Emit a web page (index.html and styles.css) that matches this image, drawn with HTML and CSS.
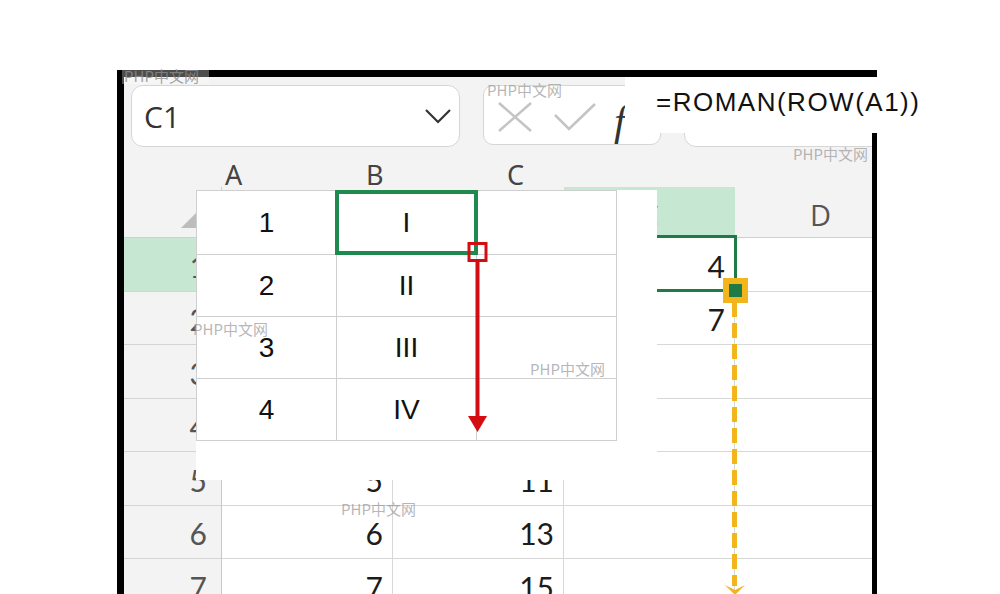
FILE: index.html
```html
<!DOCTYPE html>
<html lang="zh">
<head>
  <meta charset="UTF-8">
  <title>ROMAN(ROW(A1))</title>
  <link rel="stylesheet" href="styles.css">
</head>
<body>
  <div class="sheet">
    <div class="toolbar">
      <div class="namebox">
        <span>C1</span>
        <svg width="28" height="16" viewBox="0 0 28 16"><polyline points="2,2 14,14 26,2" fill="none" stroke="#333" stroke-width="2.2"/></svg>
      </div>
      <div class="fxbox">
        <svg width="36" height="32" viewBox="0 0 36 32"><path d="M2 2 L34 30 M34 2 L2 30" stroke="#c4c4c4" stroke-width="2.6" fill="none"/></svg>
        <svg width="44" height="30" viewBox="0 0 44 30"><polyline points="2,13 16,27 42,2" stroke="#c4c4c4" stroke-width="2.6" fill="none"/></svg>
        <i class="fx">f</i>
      </div>
      <div class="formulabar"></div>
    </div>

    <div class="grid">
      <div class="corner"><span class="tri"></span></div>
      <div class="colhead">A</div>
      <div class="colhead">B</div>
      <div class="colhead on">C</div>
      <div class="colhead">D</div>

      <div class="rowhead on">1</div><div class="cell">1</div><div class="cell">3</div>
      <div class="cell sel">4
        <span class="selbox"></span>
        <span class="dash"></span>
        <svg class="dash-tip" width="24" height="14" viewBox="0 0 24 14"><path d="M2 2 L12 12 L22 2 L12 7 Z" fill="#f2b51b"/></svg>
        <span class="handle"></span>
      </div>
      <div class="cell"></div>

      <div class="rowhead">2</div><div class="cell">2</div><div class="cell">5</div><div class="cell">7</div><div class="cell"></div>
      <div class="rowhead">3</div><div class="cell">3</div><div class="cell">7</div><div class="cell"></div><div class="cell"></div>
      <div class="rowhead">4</div><div class="cell">4</div><div class="cell">9</div><div class="cell"></div><div class="cell"></div>
      <div class="rowhead">5</div><div class="cell">5</div><div class="cell">11</div><div class="cell"></div><div class="cell"></div>
      <div class="rowhead">6</div><div class="cell">6</div><div class="cell">13</div><div class="cell"></div><div class="cell"></div>
      <div class="rowhead">7</div><div class="cell">7</div><div class="cell">15</div><div class="cell"></div><div class="cell"></div>
    </div>
  </div>

  <div class="formula-pop">=ROMAN(ROW(A1))</div>

  <div class="demo">
    <div class="labels"><span>A</span><span>B</span><span>C</span></div>
    <div class="panel">
      <table class="result">
        <tr><td>1</td><td>I</td><td></td></tr>
        <tr><td>2</td><td>II</td><td></td></tr>
        <tr><td>3</td><td>III</td><td></td></tr>
        <tr><td>4</td><td>IV</td><td></td></tr>
      </table>
      <span class="active"></span>
      <svg class="fill-arrow" width="40" height="200" viewBox="0 0 40 200">
        <rect x="12" y="1.5" width="17" height="17" fill="none" stroke="#d40d12" stroke-width="3"/>
        <line x1="20.5" y1="19" x2="20.5" y2="180" stroke="#d40d12" stroke-width="4"/>
        <path d="M11 174 L30 174 L20.5 190 Z" fill="#d40d12"/>
      </svg>
    </div>
  </div>

  <span class="mark m1">PHP中文网</span>
  <span class="mark m2">PHP中文网</span>
  <span class="mark m3">PHP中文网</span>
  <span class="mark m4">PHP中文网</span>
  <span class="mark m5">PHP中文网</span>
  <span class="mark m6">PHP中文网</span>
</body>
</html>
```

FILE: styles.css
```css
html, body { margin: 0; padding: 0; }
body { width: 1000px; height: 594px; overflow: hidden; background: #fff; position: relative; font-family: "Open Sans", sans-serif; }

/* excel window */
.sheet { margin: 70px 0 0 117px; width: 748px; height: 524px; background: #f3f3f3; border-top: 7px solid #000; border-left: 7px solid #000; border-right: 5px solid #000; overflow: hidden; position: relative; }
.toolbar { display: flex; gap: 23px; padding: 8px 0 0 7px; height: 62px; }
.toolbar > div { flex-shrink: 0; }
.namebox { width: 329px; height: 62px; box-sizing: border-box; background: #fff; border: 1px solid #d6d6d6; border-radius: 12px; display: flex; align-items: center; justify-content: space-between; padding: 0 7px 0 12px; }
.namebox span { font-size: 30px; color: #333; }
.fxbox { width: 178px; height: 60px; box-sizing: border-box; background: #fff; border: 1px solid #d6d6d6; border-radius: 10px; display: flex; align-items: center; gap: 20px; padding: 4px 0 0 13px; }
.fx { font-family: "Liberation Serif", serif; font-size: 42px; color: #333; margin: 8px 0 0 -3px; }
.formulabar { width: 300px; height: 62px; box-sizing: border-box; background: #fff; border: 1px solid #d6d6d6; border-radius: 12px; }

.grid { display: grid; grid-template-columns: 98px repeat(4, 171px); grid-template-rows: 51px repeat(7, 53.5px); margin-top: 40px; }
.corner { position: relative; border-bottom: 1px solid #cfcfcf; border-right: 1px solid #cfcfcf; }
.tri { position: absolute; right: 8px; bottom: 9px; width: 0; height: 0; border-left: 32px solid transparent; border-bottom: 32px solid #bdbdbd; }
.colhead { display: flex; align-items: center; justify-content: center; font-size: 29px; color: #555; border-bottom: 1px solid #cfcfcf; padding-top: 4px; box-sizing: border-box; }
.colhead.on { background: #c6e7d2; }
.rowhead { display: flex; align-items: center; justify-content: flex-end; padding: 3px 14px 0 0; font-family: "Lato", sans-serif; font-size: 30px; color: #555; border-bottom: 1px solid #d4d4d4; border-right: 1px solid #c8c8c8; box-sizing: border-box; }
.rowhead.on { background: #c6e7d2; }
.cell { display: flex; align-items: center; justify-content: flex-end; padding: 3px 9px 0 0; font-family: "Lato", sans-serif; font-size: 30px; color: #1c1c1c; background: #fff; border-bottom: 1px solid #d7d7d7; border-right: 1px solid #d7d7d7; box-sizing: border-box; }
.sel { position: relative; }
.selbox { position: absolute; left: -1px; top: -3px; right: -3px; bottom: -1px; border: 3px solid #1e7b45; }
.handle { position: absolute; left: 159px; top: 40px; width: 13px; height: 13px; background: #1e7b45; border: 6px solid #f2b51b; }
.dash { position: absolute; left: 168px; top: 64px; width: 5px; height: 284px; background: repeating-linear-gradient(to bottom, #f2b51b 0 15px, transparent 15px 21px); }
.dash-tip { position: absolute; left: 159px; top: 345px; }

/* formula call-out */
.formula-pop { position: absolute; left: 625px; top: 77px; width: 310px; height: 56px; box-sizing: border-box; background: #fff; padding: 12px 0 0 31px; font-family: "Liberation Sans", sans-serif; font-size: 26px; line-height: 26px; letter-spacing: 1.5px; color: #111; }

/* roman demo table */
.demo { position: absolute; left: 196px; top: 160px; }
.labels { display: flex; height: 30px; }
.labels span { width: 141px; box-sizing: border-box; padding-left: 29px; font-family: "Noto Sans", sans-serif; font-size: 27px; line-height: 30px; color: #444; }
.panel { position: relative; width: 461px; height: 290px; background: #fff; }
.result { border-collapse: collapse; font-family: "Liberation Sans", sans-serif; font-size: 28px; color: #111; }
.result td { width: 140px; height: 62px; padding: 0; border: 1px solid #cfcfcf; text-align: center; box-sizing: border-box; }
.result tr:first-child td { height: 64px; }
.active { position: absolute; left: 139px; top: 0; width: 143px; height: 65px; box-sizing: border-box; border: 4px solid #1f8a4f; }
.fill-arrow { position: absolute; left: 261px; top: 52px; }

/* watermarks */
.mark { position: absolute; font-family: "Noto Sans CJK SC", sans-serif; font-size: 15px; line-height: 17px; color: rgba(150, 150, 150, 0.7); white-space: nowrap; }
.m1 { left: 122px; top: 67px; background: rgba(255, 255, 255, 0.3); padding: 0 10px 0 2px; color: rgba(140, 140, 140, 0.8); }
.m2 { left: 487px; top: 81px; }
.m3 { left: 793px; top: 145px; }
.m4 { left: 193px; top: 320px; }
.m5 { left: 530px; top: 360px; }
.m6 { left: 341px; top: 500px; }
```
